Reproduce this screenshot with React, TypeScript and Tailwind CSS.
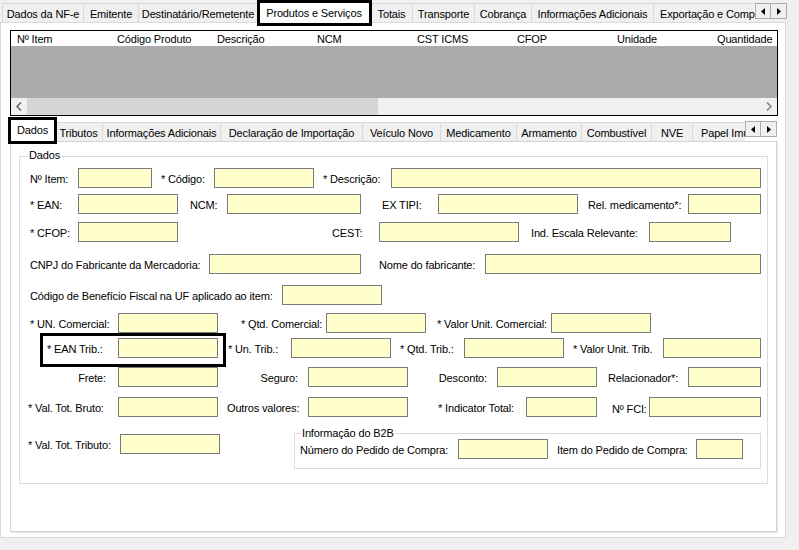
import React from "react";

function L({ c, children }: { c: string; children: React.ReactNode }) {
  return (
    <span className={"shrink-0 whitespace-nowrap leading-[13px] translate-y-[1px] " + c}>
      {children}
    </span>
  );
}

function I({ c }: { c: string }) {
  return <div className={"shrink-0 h-[20px] border border-[#7a7a7a] bg-[#ffffcc] " + c} />;
}

function Tab({ c, children }: { c: string; children: React.ReactNode }) {
  return (
    <div
      className={
        "shrink-0 h-[19px] mb-px border-t border-r border-[#d9d9d9] bg-[#f0f0f0] flex justify-center pt-[4px] leading-[13px] whitespace-nowrap overflow-hidden " +
        c
      }
    >
      {children}
    </div>
  );
}

function Arrows({ c }: { c: string }) {
  return (
    <div className={"flex shrink-0 self-start " + c}>
      <div className="w-[16px] h-[16px] border border-[#adadad] bg-[#f0f0f0] flex items-center justify-center">
        <svg width="4" height="7" viewBox="0 0 4 7">
          <path d="M4 0 L0 3.5 L4 7Z" fill="#000" />
        </svg>
      </div>
      <div className="w-[16px] h-[16px] border border-l-0 border-[#adadad] bg-[#f0f0f0] flex items-center justify-center">
        <svg width="4" height="7" viewBox="0 0 4 7">
          <path d="M0 0 L4 3.5 L0 7Z" fill="#000" />
        </svg>
      </div>
    </div>
  );
}

export default function App() {
  return (
    <div className="relative w-[799px] h-[550px] bg-[#f0f0f0] overflow-hidden text-[11px] tracking-[-0.15px] text-black font-['Liberation_Sans',Arial,sans-serif]">
      {/* top tab strip */}
      <div className="relative z-10 flex h-[23px] -mb-px">
        <div className="w-[755px] h-[23px] flex items-end pl-[2px] overflow-hidden">
          <Tab c="w-[82px] border-l">Dados da NF-e</Tab>
          <Tab c="w-[55px]">Emitente</Tab>
          <Tab c="w-[119px]">Destinatário/Remetente</Tab>
          <div className="shrink-0 w-[113px] h-[22px] bg-white border-t border-r border-[#d9d9d9] flex justify-center pt-[5px] leading-[13px] whitespace-nowrap">
            Produtos e Serviços
          </div>
          <Tab c="w-[42px]">Totais</Tab>
          <Tab c="w-[62px]">Transporte</Tab>
          <Tab c="w-[57px]">Cobrança</Tab>
          <Tab c="w-[122px]">Informações Adicionais</Tab>
          <Tab c="w-[130px] !justify-start pl-[6px]">Exportação e Compras</Tab>
        </div>
        <Arrows c="mt-[3px]" />
      </div>

      {/* main panel */}
      <div className="w-[786px] h-[516px] bg-white border border-[#d9d9d9] pl-[9px] pt-[7px] flex flex-col">
        {/* grid */}
        <div className="shrink-0 w-[768px] h-[86px] border border-black flex flex-col">
          <div className="h-[15px] bg-white flex overflow-hidden leading-[13px] pt-[2px]">
            <div className="shrink-0 w-[99px] pl-[6px]">Nº Item</div>
            <div className="shrink-0 w-[100px] pl-[7px]">Código Produto</div>
            <div className="shrink-0 w-[100px] pl-[7px]">Descrição</div>
            <div className="shrink-0 w-[100px] pl-[7px]">NCM</div>
            <div className="shrink-0 w-[100px] pl-[7px]">CST ICMS</div>
            <div className="shrink-0 w-[100px] pl-[7px]">CFOP</div>
            <div className="shrink-0 w-[100px] pl-[7px]">Unidade</div>
            <div className="shrink-0 w-[67px] pl-[7px] whitespace-nowrap">Quantidade</div>
          </div>
          <div className="flex-1 bg-[#ababab]" />
          <div className="h-[17px] bg-[#f0f0f0] flex">
            <div className="w-[16px] flex items-center justify-center">
              <svg width="6" height="9" viewBox="0 0 6 9">
                <path d="M5 0.5 L1 4.5 L5 8.5" stroke="#606060" strokeWidth="1.5" fill="none" />
              </svg>
            </div>
            <div className="w-[351px] bg-[#d6d6d6]" />
            <div className="flex-1" />
            <div className="w-[16px] flex items-center justify-center">
              <svg width="6" height="9" viewBox="0 0 6 9">
                <path d="M1 0.5 L5 4.5 L1 8.5" stroke="#808080" strokeWidth="1.5" fill="none" />
              </svg>
            </div>
          </div>
        </div>

        {/* sub tabs */}
        <div className="relative z-10 flex h-[24px] mt-[2px] -mb-px">
          <div className="w-[735px] h-[24px] flex items-end overflow-hidden">
            <div className="shrink-0 w-[45px] h-[24px] bg-white border-t border-l border-r border-[#d9d9d9] flex justify-center pt-[5px] leading-[13px]">
              Dados
            </div>
            <Tab c="w-[48px]">Tributos</Tab>
            <Tab c="w-[118px]">Informações Adicionais</Tab>
            <Tab c="w-[142px]">Declaração de Importação</Tab>
            <Tab c="w-[78px]">Veículo Novo</Tab>
            <Tab c="w-[76px]">Medicamento</Tab>
            <Tab c="w-[65px]">Armamento</Tab>
            <Tab c="w-[70px]">Combustível</Tab>
            <Tab c="w-[41px]">NVE</Tab>
            <Tab c="w-[80px] !justify-start pl-[8px]">Papel Imune</Tab>
          </div>
          <Arrows c="mt-[3px]" />
        </div>

        {/* inner panel */}
        <div className="shrink-0 w-[767px] h-[391px] bg-white border border-[#d4d4d4] shadow-[1px_1px_0_#e6e6e6] pl-[8px] pt-[14px]">
          <div className="relative w-[749px] h-[328px] border border-[#dcdcdc] flex flex-col">
            <span className="absolute left-[8px] top-[-8px] px-[1px] bg-white leading-[13px]">Dados</span>

            {/* row 1 */}
            <div className="flex items-center h-[20px] mt-[11px]">
              <L c="ml-[10px] w-[48px]">Nº Item:</L>
              <I c="w-[74px]" />
              <L c="ml-[9px] w-[53px]">* Código:</L>
              <I c="w-[100px]" />
              <L c="ml-[9px] w-[68px]">* Descrição:</L>
              <I c="w-[370px]" />
            </div>

            {/* row 2 */}
            <div className="flex items-center h-[20px] mt-[6px]">
              <L c="ml-[10px] w-[48px]">* EAN:</L>
              <I c="w-[100px]" />
              <L c="ml-[12px] w-[37px]">NCM:</L>
              <I c="w-[134px]" />
              <L c="ml-[21px] w-[56px]">EX TIPI:</L>
              <I c="w-[140px]" />
              <L c="ml-[10px] w-[100px]">Rel. medicamento*:</L>
              <I c="w-[73px]" />
            </div>

            {/* row 3 */}
            <div className="flex items-center h-[20px] mt-[8px]">
              <L c="ml-[10px] w-[48px]">* CFOP:</L>
              <I c="w-[100px]" />
              <L c="ml-[154px] w-[47px]">CEST:</L>
              <I c="w-[140px]" />
              <L c="ml-[12px] w-[118px]">Ind. Escala Relevante:</L>
              <I c="w-[82px]" />
            </div>

            {/* row 4 */}
            <div className="flex items-center h-[20px] mt-[12px]">
              <L c="ml-[10px] w-[179px]">CNPJ do Fabricante da Mercadoria:</L>
              <I c="w-[152px]" />
              <L c="ml-[18px] w-[106px]">Nome do fabricante:</L>
              <I c="w-[276px]" />
            </div>

            {/* row 5 */}
            <div className="flex items-center h-[20px] mt-[11px]">
              <L c="ml-[10px] w-[252px]">Código de Benefício Fiscal na UF aplicado ao item:</L>
              <I c="w-[100px]" />
            </div>

            {/* row 6 */}
            <div className="flex items-center h-[20px] mt-[8px]">
              <L c="ml-[10px] w-[88px]">* UN. Comercial:</L>
              <I c="w-[100px]" />
              <L c="ml-[23px] w-[85px]">* Qtd. Comercial:</L>
              <I c="w-[100px]" />
              <L c="ml-[11px] w-[114px]">* Valor Unit. Comercial:</L>
              <I c="w-[100px]" />
            </div>

            {/* row 7 */}
            <div className="flex items-center h-[20px] mt-[5px]">
              <L c="ml-[27px] w-[71px]">* EAN Trib.:</L>
              <I c="w-[100px]" />
              <L c="ml-[10px] w-[63px]">* Un. Trib.:</L>
              <I c="w-[100px]" />
              <L c="ml-[9px] w-[64px]">* Qtd. Trib.:</L>
              <I c="w-[100px]" />
              <L c="ml-[9px] w-[90px]">* Valor Unit. Trib.</L>
              <I c="w-[98px]" />
            </div>

            {/* row 8 */}
            <div className="flex items-center h-[20px] mt-[9px]">
              <L c="ml-[10px] w-[88px] text-right pr-[12px]">Frete:</L>
              <I c="w-[100px]" />
              <L c="w-[90px] text-right pr-[10px]">Seguro:</L>
              <I c="w-[100px]" />
              <L c="w-[89px] text-right pr-[10px]">Desconto:</L>
              <I c="w-[100px]" />
              <L c="ml-[11px] w-[80px] -translate-y-[1px]">Relacionador*:</L>
              <I c="w-[73px]" />
            </div>

            {/* row 9 */}
            <div className="flex items-center h-[20px] mt-[10px]">
              <L c="ml-[8px] w-[90px]">* Val. Tot. Bruto:</L>
              <I c="w-[100px]" />
              <L c="ml-[9px] w-[81px]">Outros valores:</L>
              <I c="w-[100px]" />
              <L c="ml-[30px] w-[88px]">* Indicator Total:</L>
              <I c="w-[71px]" />
              <L c="ml-[15px] w-[37px] translate-y-[2px]">Nº FCI:</L>
              <I c="w-[112px]" />
            </div>

            {/* row 10 */}
            <div className="flex items-start mt-[16px]">
              <div className="flex items-center h-[20px] mt-px">
                <L c="ml-[8px] w-[92px]">* Val. Tot. Tributo:</L>
                <I c="w-[100px]" />
              </div>
              <div className="relative ml-[74px] w-[467px] h-[36px] border border-[#dcdcdc]">
                <span className="absolute left-[6px] top-[-7px] px-[1px] bg-white leading-[13px]">
                  Informação do B2B
                </span>
                <div className="flex items-center h-[20px] mt-[5px]">
                  <L c="ml-[5px] w-[158px]">Número do Pedido de Compra:</L>
                  <I c="w-[90px]" />
                  <L c="ml-[9px] w-[139px]">Item do Pedido de Compra:</L>
                  <I c="w-[47px]" />
                </div>
              </div>
            </div>
          </div>
        </div>
      </div>

      {/* annotation boxes */}
      <div className="absolute left-[257px] top-0 w-[115px] h-[26px] border-[3px] border-black z-20 pointer-events-none" />
      <div className="absolute left-[8px] top-[117px] w-[49px] h-[27px] border-[3px] border-black z-20 pointer-events-none" />
      <div className="absolute left-[40px] top-[333px] w-[186px] h-[34px] border-[3px] border-black z-20 pointer-events-none" />
    </div>
  );
}
